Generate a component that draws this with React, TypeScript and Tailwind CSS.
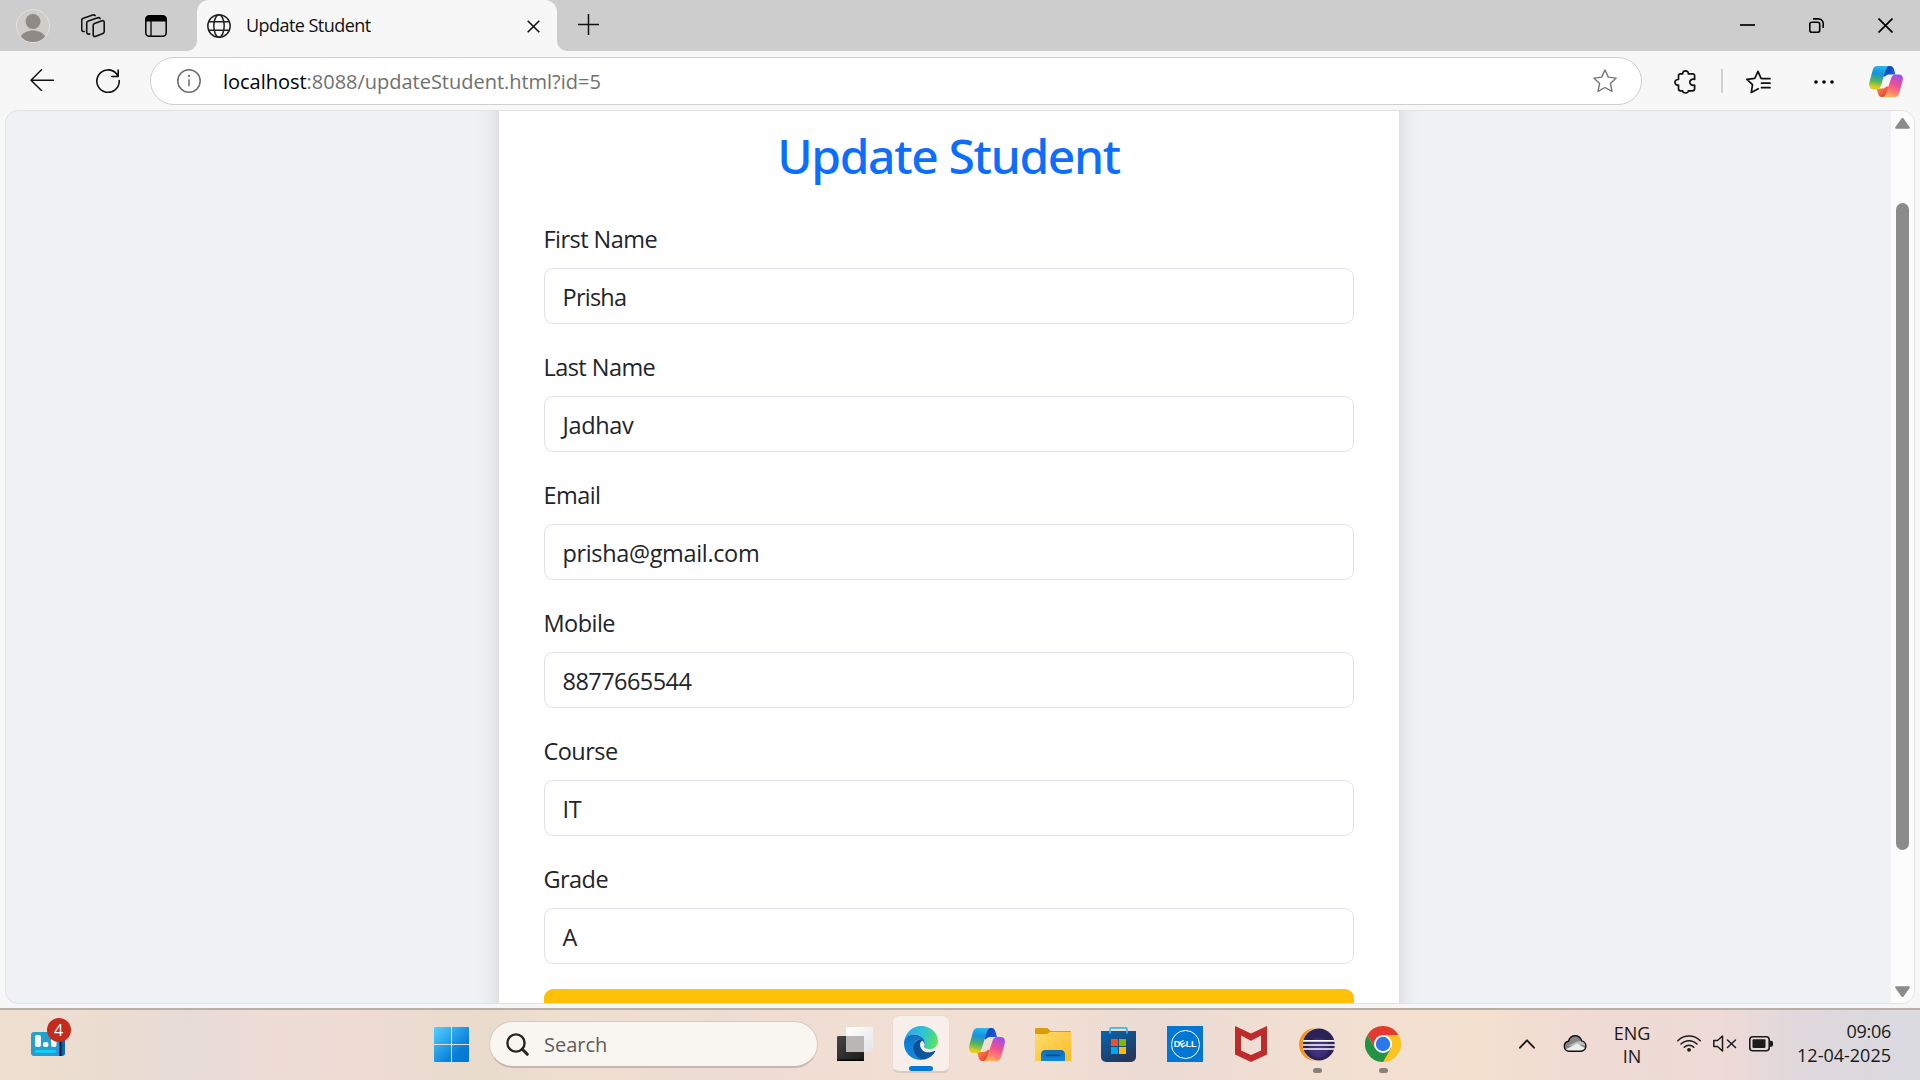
import React from "react";

const BODY_FONT = "font-['Open_Sans','Noto_Sans',sans-serif]";

const fields = [
  { label: "First Name", value: "Prisha", tracking: "tracking-[-0.750px]" },
  { label: "Last Name", value: "Jadhav", tracking: "tracking-[-0.350px]" },
  { label: "Email", value: "prisha@gmail.com", tracking: "tracking-[-0.350px]" },
  { label: "Mobile", value: "8877665544", tracking: "tracking-[-0.550px]" },
  { label: "Course", value: "IT", tracking: "tracking-[-0.350px]" },
  { label: "Grade", value: "A", tracking: "tracking-[-0.350px]" },
];

function CopilotIcon({ id, className }: { id: string; className?: string }) {
  return (
    <svg viewBox="0 0 36 33" className={className} fill="none">
      <defs>
        <linearGradient id={id + "a"} x1="12" y1="0" x2="7" y2="27" gradientUnits="userSpaceOnUse">
          <stop offset="0" stopColor="#27b8f0" />
          <stop offset="0.3" stopColor="#1591dd" />
          <stop offset="0.6" stopColor="#52b45c" />
          <stop offset="0.85" stopColor="#d9cf20" />
          <stop offset="1" stopColor="#ffc800" />
        </linearGradient>
        <linearGradient id={id + "b"} x1="30" y1="9" x2="22" y2="33" gradientUnits="userSpaceOnUse">
          <stop offset="0" stopColor="#a04cf0" />
          <stop offset="0.45" stopColor="#ee5090" />
          <stop offset="0.75" stopColor="#ff7a70" />
          <stop offset="1" stopColor="#ffb657" />
        </linearGradient>
        <linearGradient id={id + "c"} x1="17" y1="1" x2="27" y2="9" gradientUnits="userSpaceOnUse">
          <stop offset="0" stopColor="#0a3bb5" />
          <stop offset="1" stopColor="#1f60e0" />
        </linearGradient>
        <linearGradient id={id + "d"} x1="9" y1="24" x2="17" y2="33" gradientUnits="userSpaceOnUse">
          <stop offset="0" stopColor="#ff8a48" />
          <stop offset="1" stopColor="#e23b2e" />
        </linearGradient>
      </defs>
      <path d="M16 0h6.500c2.300 0 3.300 1.500 4 3.700L28 9h-6c-2.300 0-4 .6-5.300 2.500L14 10z" fill={`url(#${id}c)`} />
      <path d="M20 33h-6.500c-2.300 0-3.300-1.500-4-3.700L8 24h5.500c2.300 0 4-.6 5.300-2.500L22 23z" fill={`url(#${id}d)`} />
      <path d="M8.500 0H22c-2 0-3.200 1.400-4 4l-5.500 17c-.8 2.600-2.200 4-4.600 4H4.500C.8 25-.7 21.500.4 17L3.800 4.500C4.700 1.500 6 0 8.500 0z" fill={`url(#${id}a)`} />
      <path d="M27.500 33H14c2 0 3.200-1.400 4-4l5.500-16c.8-2.600 2.200-4 4.600-4h3.400c3.700 0 5.200 2.500 4.100 7l-3.400 12.500c-.9 3-2.200 4.500-4.700 4.500z" fill={`url(#${id}b)`} />
    </svg>
  );
}

function TitleBar() {
  return (
    <header className="flex h-[51px] shrink-0 items-start bg-[#cdcdcd] text-black">
      <div className="flex w-[197px] shrink-0">
        <svg viewBox="0 0 34 34" className="mt-[9px] ml-4 size-[34px]">
          <circle cx="17" cy="17" r="16.500" fill="#cfcdc9" stroke="#e2e1de" />
          <circle cx="17" cy="12.500" r="7.500" fill="#8f8a86" />
          <path d="M4.800 27.500C6.800 23.700 11.500 21.500 17 21.500s10.200 2.200 12.200 6A16 16 0 0 1 17 33 16 16 0 0 1 4.800 27.500z" fill="#8f8a86" />
        </svg>
        <svg viewBox="0 0 24 24" className="mt-[14px] ml-[31px] size-6" fill="none" stroke="#111" strokeWidth="1.600" strokeLinejoin="round" strokeLinecap="round">
          <path d="M12.200 11.300c0-.9.500-1.600 1.300-1.900l7.600-2.600c1.100-.4 2.100.3 2.100 1.400v9.400c0 .9-.5 1.600-1.300 1.900l-7.600 2.900c-1.100.4-2.100-.3-2.100-1.400z" />
          <path d="M8.700 19.900c-1.900.6-3-.3-3-1.800V9.200c0-1 .6-1.900 1.600-2.200l9.500-3.200c1-.3 1.900 0 2.300.8" />
          <path d="M3.200 17.500c-1.500.2-2.500-.7-2.500-2V6.500c0-1 .6-1.900 1.600-2.200L11.800 1c1-.3 1.900 0 2.300.6" />
        </svg>
        <svg viewBox="0 0 22 22" className="mt-[15px] ml-10 size-[22px]">
          <rect x="0.800" y="0.800" width="20.400" height="20.400" rx="3.500" fill="none" stroke="#000" strokeWidth="1.500" />
          <path d="M.8 6.500V4A3.200 3.200 0 0 1 4 .8h14A3.200 3.200 0 0 1 21.200 4v2.500z" fill="#000" />
          <path d="M6 6v15" stroke="#000" strokeWidth="1.300" />
        </svg>
      </div>
      <div className="relative flex h-[51px] w-[360px] rounded-t-[12px] bg-[#f7f7f7]">
        <svg viewBox="0 0 10 10" className="absolute bottom-0 -left-[10px] size-[10px]"><path d="M10 0v10H0A10 10 0 0 0 10 0z" fill="#f7f7f7" /></svg>
        <svg viewBox="0 0 10 10" className="absolute -right-[10px] bottom-0 size-[10px]"><path d="M0 0v10h10A10 10 0 0 1 0 0z" fill="#f7f7f7" /></svg>
        <svg viewBox="0 0 24 24" className="mt-[14px] ml-[10px] size-6" fill="none" stroke="#222" strokeWidth="1.500">
          <circle cx="12" cy="12" r="11.200" />
          <ellipse cx="12" cy="12" rx="5.200" ry="11.200" />
          <path d="M1.700 7.800h20.600M1.700 16.200h20.600" />
        </svg>
        <span className="mt-[10px] ml-[15px] w-[240px] text-[18px] leading-[30px] tracking-[-0.550px] text-[#111]">Update Student</span>
        <svg viewBox="0 0 13 13" className="mt-[20px] ml-[41px] size-[13px]" stroke="#111" strokeWidth="1.600"><path d="M.7.700l11.600 11.600M12.300.700L.7 12.300" /></svg>
      </div>
      <svg viewBox="0 0 21 21" className="mt-[14px] ml-[21px] size-[21px]" stroke="#111" strokeWidth="1.500"><path d="M10.500 0v21M0 10.500h21" /></svg>
      <div className="ml-auto flex">
        <svg viewBox="0 0 15 15" className="mt-[18px] mr-[54px] size-[15px]" stroke="#000" strokeWidth="1.700"><path d="M0 7h15" /></svg>
        <svg viewBox="0 0 15 15" className="mt-[18px] mr-[54px] size-[15px]" fill="none" stroke="#000" strokeWidth="1.600">
          <rect x="0.800" y="4.300" width="9.900" height="9.900" rx="2" />
          <path d="M4 .9h5.500a4.700 4.700 0 0 1 4.700 4.700V10" />
        </svg>
        <svg viewBox="0 0 15 15" className="mt-[18px] mr-[27px] size-[15px]" stroke="#000" strokeWidth="1.700"><path d="M.5.500l14 14M14.500.500l-14 14" /></svg>
      </div>
    </header>
  );
}

function Toolbar() {
  return (
    <div className="flex h-[59px] shrink-0 bg-[#f7f7f7]">
      <svg viewBox="0 0 24 22" className="mt-[18px] ml-[30px] h-[22px] w-6" fill="none" stroke="#111" strokeWidth="1.500" strokeLinecap="round" strokeLinejoin="round"><path d="M23.500 11.300H1M11.500.800L1 11.300l10.500 10.200" /></svg>
      <svg viewBox="0 0 24 24" className="mt-[18px] ml-[42px] size-6" fill="none" stroke="#111" strokeWidth="1.600" strokeLinecap="round" strokeLinejoin="round"><path d="M23.200 11.500A11.200 11.200 0 1 1 20.500 4.800L22 7M22.200 1v6.500h-6.500" /></svg>
      <div className="mt-[6px] ml-[30px] flex h-12 w-[1492px] items-center rounded-full border-[1.500px] border-[#cfcfcf] bg-white">
        <svg viewBox="0 0 24 24" className="ml-[26px] size-6" fill="none" stroke="#6b6b6b" strokeWidth="1.500">
          <circle cx="12" cy="12" r="11.200" /><path d="M12 10.300v7" /><circle cx="12" cy="6.900" r="1.100" fill="#6b6b6b" stroke="none" />
        </svg>
        <p className="mt-[2px] ml-[22px] text-[20px] leading-7 tracking-[-0.020px] text-[#707070]"><span className="text-black">localhost</span>:8088/updateStudent.html?id=5</p>
        <svg viewBox="0 0 24 24" className="mr-[24px] ml-auto size-6" fill="none" stroke="#767676" strokeWidth="1.400" strokeLinejoin="round"><path d="M12 1l3.300 7.100 7.900 1-5.800 5.300 1.600 7.900L12 18.500l-7 3.800 1.600-7.900L.8 9.100l7.900-1z" /></svg>
      </div>
      <svg viewBox="0 0 22 24" className="mt-[19px] ml-[32px] h-6 w-[22px]" fill="none" stroke="#111" strokeWidth="1.700" strokeLinejoin="round">
        <path d="M8.700 3.800C8.500 2 9.800.9 11.500.9S14.500 2 14.300 3.800h4.200c1.200 0 2.100.8 2.100 2v3.600c-1.200-.3-2.700-.2-3.700.6-1.500 1.200-1.500 3.300 0 4.500 1 .8 2.500.9 3.700.6v3.700c0 1.200-.9 2-2.100 2h-4.200c.2 1.300-1.100 2.200-2.800 2.200s-3-.9-2.800-2.200H6.600c-1.200 0-2.100-.8-2.100-2v-3.700C2.600 15.300.9 14.100.9 12.300s1.700-3 3.600-2.800V5.800c0-1.200.9-2 2.100-2z" />
      </svg>
      <span className="mt-[18px] ml-[25px] h-6 w-[2px] bg-[#d1d1d1]" />
      <svg viewBox="0 0 25 24" className="mt-[19px] ml-[23px] h-6 w-[25px]" fill="none" stroke="#111" strokeWidth="1.700" strokeLinejoin="round" strokeLinecap="round">
        <path d="M17 8.700l-2-.3L12 1.300 8.800 8.300.9 9.300l5.600 5.400L5.300 22.500l7-3.700M17 8.700h7M15.500 13.200H24M15.500 17.700H24" />
      </svg>
      <svg viewBox="0 0 20 4" className="mt-[29px] ml-[43px] h-1 w-5"><circle cx="2" cy="2" r="1.800" /><circle cx="10" cy="2" r="1.800" /><circle cx="18" cy="2" r="1.800" /></svg>
      <CopilotIcon id="top" className="mt-[15px] ml-[35px] h-[31px] w-[34px]" />
    </div>
  );
}

function Page() {
  return (
    <div className="mr-[5px] ml-[5px] flex h-[894px] shrink-0 overflow-hidden rounded-[13px] border border-[#e2e2e4] bg-[#f0f1f5]">
      <main className="flex flex-1 justify-center overflow-hidden">
        <section className="-mt-9 h-[980px] w-[900px] shrink-0 bg-white px-[45px] pt-[52px] text-[#212529] shadow-[0_0_22px_rgba(0,0,0,0.13)]">
          <h1 className="mb-9 text-center font-['Noto_Sans','Open_Sans',sans-serif] text-[48px] leading-[58px] font-medium tracking-[-1.350px] text-[#0d6efd]">Update Student</h1>
          {fields.map((f) => (
            <div key={f.label} className="mb-6 text-[23.500px]">
              <div className="mb-[11px] leading-9 tracking-[-0.550px] pt-px -mt-px mb-[11px]">{f.label}</div>
              <div className="flex h-14 items-center rounded-[9px] border-[1.500px] border-[#dee2e6] bg-white px-[18px] pt-[2px] mb-[25px]">
                <span className={`leading-9 ${f.tracking}`}>{f.value}</span>
              </div>
            </div>
          ))}
          <div className="h-14 rounded-[9px] bg-[#ffc107]" />
        </section>
      </main>
      <aside className="flex w-[23px] shrink-0 flex-col items-center bg-[#fcfcfc]">
        <svg viewBox="0 0 15 11" className="mt-[7px] h-[11px] w-[15px]"><path d="M6.300.700a1.500 1.500 0 0 1 2.400 0l5.900 8.300c.5.900 0 1.800-1 1.800H1.400c-1 0-1.500-.9-1-1.800z" fill="#8b8b8b" /></svg>
        <div className="mt-[74px] h-[647px] w-[13px] rounded-full bg-[#8b8b8b]" />
        <svg viewBox="0 0 15 11" className="mt-auto mb-[6px] h-[11px] w-[15px] rotate-180"><path d="M6.300.700a1.500 1.500 0 0 1 2.400 0l5.900 8.300c.5.900 0 1.800-1 1.800H1.400c-1 0-1.500-.9-1-1.800z" fill="#8b8b8b" /></svg>
      </aside>
    </div>
  );
}

function WidgetIcon() {
  return (
    <div className="relative mt-[22px] ml-[31px] h-6 w-[34px]">
      <svg viewBox="0 0 34 24" className="h-6 w-[34px]">
        <defs><linearGradient id="wg" x1="0" y1="0" x2="1" y2="1"><stop stopColor="#20a8c0" /><stop offset="1" stopColor="#2f93dc" /></linearGradient></defs>
        <rect x="20" width="14" height="24" rx="3" fill="#1264b0" />
        <rect x="28" y="8" width="2.500" height="16" fill="#03182e" />
        <path d="M3 0h25.500v24H3a3 3 0 0 1-3-3V3a3 3 0 0 1 3-3z" fill="url(#wg)" />
        <rect x="4" y="3" width="6" height="12" rx="2" fill="#f3fdff" />
        <rect x="12" y="10" width="5.500" height="5" rx="2" fill="#f3fdff" />
        <rect x="20" y="6" width="5.500" height="9" rx="2" fill="#f3fdff" />
        <rect x="4" y="18" width="21" height="2.700" rx="1" fill="#0cd2f5" />
      </svg>
      <span className="absolute -top-[14px] left-[15.500px] flex size-6 items-center justify-center rounded-full bg-[#c42b1c] text-[16px] leading-none text-white">4</span>
    </div>
  );
}

function StartIcon() {
  return (
    <svg viewBox="0 0 35 35" className="size-[35px]">
      <defs><linearGradient id="win" x1="0" y1="0" x2="35" y2="35" gradientUnits="userSpaceOnUse"><stop stopColor="#54d2ff" /><stop offset="0.500" stopColor="#1d94e4" /><stop offset="0.700" stopColor="#0a7ed8" /><stop offset="1" stopColor="#0074d0" /></linearGradient></defs>
      <path d="M1 0h16v17H0V1a1 1 0 0 1 1-1zM18 0h16a1 1 0 0 1 1 1v16H18zM0 18h17v17H1a1 1 0 0 1-1-1zM18 18h17v16a1 1 0 0 1-1 1H18z" fill="url(#win)" />
    </svg>
  );
}

function TaskViewIcon() {
  return (
    <svg viewBox="0 0 36 34" className="h-[34px] w-9">
      <defs>
        <linearGradient id="tv1" x1="0" y1="0" x2="1" y2="1"><stop stopColor="#474543" /><stop offset="1" stopColor="#1a1a1a" /></linearGradient>
        <linearGradient id="tv2" x1="0" y1="0" x2="1" y2="1"><stop stopColor="#ffffff" /><stop offset="1" stopColor="#e3e4e6" /></linearGradient>
      </defs>
      <rect x="0" y="9" width="27" height="25" rx="1.300" fill="url(#tv1)" />
      <rect x="9" y="0" width="27" height="25" rx="1" fill="url(#tv2)" />
      <rect x="9" y="9" width="18" height="16" fill="#b9b7b5" />
      <rect y="32.500" width="27" height="1.500" rx=".7" fill="#050505" />
    </svg>
  );
}

function EdgeIcon() {
  return (
    <svg viewBox="0 0 36 36" className="size-9">
      <defs>
        <linearGradient id="e1" x1="3" y1="8" x2="36" y2="20" gradientUnits="userSpaceOnUse"><stop stopColor="#2ea5ee" /><stop offset="0.450" stopColor="#2fc2d6" /><stop offset="0.750" stopColor="#45d590" /><stop offset="1" stopColor="#6ce848" /></linearGradient>
        <linearGradient id="e2" x1="10" y1="8" x2="12" y2="36" gradientUnits="userSpaceOnUse"><stop stopColor="#116fb9" /><stop offset="0.400" stopColor="#0b7fd8" /><stop offset="1" stopColor="#1388df" /></linearGradient>
        <linearGradient id="e3" x1="10" y1="20" x2="33" y2="30" gradientUnits="userSpaceOnUse"><stop stopColor="#0d4f96" /><stop offset="1" stopColor="#1159a8" /></linearGradient>
      </defs>
      <path d="M.3 16.500C1.500 7 8.800 0 18 0c10.500 0 18 7.500 18 15.500 0 5.500-4 9-9.200 9-3.800 0-6-1.300-6-2.700 0-1 1.300-1.600 1.300-4.300 0-4.700-5-8.500-11-8.500C6 9 2 12 .3 16.500z" fill="url(#e1)" />
      <path d="M0 18.500C0 12.500 5 9 11 9c6.200 0 11.100 3.900 11.100 8.500 0 1-.2 1.700-.4 2.300-.8-3.200-2.200-5.600-5.200-5.600-3.500 0-6 3.800-6 8.300 0 7 4.800 12.500 11 13-1.100.3-2.300.4-3.500.4C8 36 0 28.500 0 18.500z" fill="url(#e2)" />
      <path d="M16 14.300c-3.400 1-6 4.400-6 8.700C10 30.500 16 36 22 35.500c5-1.200 8.800-4.500 11-8.200.4-.8-.2-1.300-1-.9-2 1-4.300 1.400-6.500 1.400-5 0-8.500-4-8.500-8.300 0-2.300 1.700-4.500 3.700-3.800-1.200-1.200-3-1.900-4.700-1.400z" fill="url(#e3)" />
    </svg>
  );
}

function FolderIcon() {
  return (
    <svg viewBox="0 0 36 33" className="h-[33px] w-9">
      <defs>
        <linearGradient id="f1" x1="0" y1="0" x2="1" y2="1"><stop stopColor="#ffdb6b" /><stop offset="1" stopColor="#fdbc28" /></linearGradient>
        <linearGradient id="f2" x1="0" y1="0" x2="0" y2="1"><stop stopColor="#0c6cb6" /><stop offset="1" stopColor="#1088dc" /></linearGradient>
      </defs>
      <path d="M1.300 0h10c1 0 1.800.5 2.500 1.200L15.500 3H35c.6 0 1 .4 1 1v6H0V1.300C0 .6.600 0 1.300 0z" fill="#dc9c08" />
      <path d="M0 6h11c1 0 1.700-.3 2.500-1l1.300-1H36v28c0 .6-.4 1-1 1H1c-.6 0-1-.4-1-1z" fill="url(#f1)" />
      <path d="M6 33v-7c0-2.200 1.600-4 4-4h16c2.400 0 4 1.800 4 4v7z" fill="url(#f2)" />
      <rect x="10.500" y="26.400" width="15" height="1.800" rx=".9" fill="#0a4a84" />
    </svg>
  );
}

function StoreIcon() {
  return (
    <svg viewBox="0 0 35 35" className="mr-px size-[35px]">
      <defs><linearGradient id="st" x1="0" y1="0" x2="0.600" y2="1"><stop stopColor="#0865b0" /><stop offset="1" stopColor="#24375c" /></linearGradient></defs>
      <path d="M0 4h35v26a5 5 0 0 1-5 5H5a5 5 0 0 1-5-5z" fill="url(#st)" />
      <path d="M9 6.500V2.200C9 1.400 9.500.9 10.300.900h14.400c.8 0 1.300.5 1.300 1.300v4.300" fill="none" stroke="#30bdf0" strokeWidth="1.700" />
      <rect x="10" y="12" width="7" height="7" fill="#f25022" /><rect x="18" y="12" width="7" height="7" fill="#7fba00" />
      <rect x="10" y="20" width="7" height="7" fill="#00a4ef" /><rect x="18" y="20" width="7" height="7" fill="#ffb900" />
    </svg>
  );
}

function DellIcon() {
  return (
    <div className="flex size-9 items-center justify-center bg-[#0176d3]">
      <div className="flex size-[29px] items-center justify-center rounded-full border-[1.500px] border-white font-['Liberation_Sans',sans-serif] text-[9px] leading-none font-bold tracking-[-0.300px] text-white">
        <span>D</span><span className="-rotate-[28deg]">E</span><span>LL</span>
      </div>
    </div>
  );
}

function McAfeeIcon() {
  return (
    <svg viewBox="0 0 32 36" className="h-9 w-8">
      <path fillRule="evenodd" d="M0 0l16 7.500L32 0v28.500L16 36 0 28.500zM6 9.500v15L16 29l10-4.500v-15L16 14.800z" fill="#be2b2b" />
    </svg>
  );
}

function EclipseIcon() {
  return (
    <svg viewBox="0 0 36 33" className="h-[33px] w-9">
      <defs><radialGradient id="ec" cx="0.500" cy="0.600" r="0.500"><stop stopColor="#473788" /><stop offset="0.600" stopColor="#3a2c72" /><stop offset="0.650" stopColor="#2c2255" /><stop offset="1" stopColor="#2c2255" /></radialGradient></defs>
      <path d="M16 0C7 .5 0 7.500 0 16.500S7 32.500 16 33C8.500 30.500 4 24 4 16.500S8.500 2.500 16 0z" fill="#f7941e" />
      <circle cx="19.800" cy="16.500" r="16" fill="url(#ec)" />
      <path d="M4 12.800h31.600M3.600 17h32.400M4 21h31.600" stroke="#fff" strokeWidth="1.700" />
    </svg>
  );
}

function ChromeIcon() {
  return (
    <svg viewBox="0 0 36 36" className="size-9">
      <path d="M18 9h15.600A18 18 0 0 1 18 36z" fill="#fcc31e" />
      <path d="M18 9h15.600A18 18 0 0 0 2.400 9l7.800 13.500z" fill="#e33b2e" />
      <path d="M2.400 9A18 18 0 0 0 18 36l7.800-13.500H10.200z" fill="#229342" />
      <circle cx="18" cy="18" r="9" fill="#fff" />
      <circle cx="18" cy="18" r="7.200" fill="#2b78ee" />
    </svg>
  );
}

const apps = [
  { name: "taskview", icon: <TaskViewIcon />, running: false },
  { name: "edge", icon: <EdgeIcon />, running: false },
  { name: "copilot", icon: <CopilotIcon id="bar" className="h-[33px] w-9" />, running: false },
  { name: "files", icon: <FolderIcon />, running: false },
  { name: "store", icon: <StoreIcon />, running: false },
  { name: "dell", icon: <DellIcon />, running: false },
  { name: "mcafee", icon: <McAfeeIcon />, running: false },
  { name: "eclipse", icon: <EclipseIcon />, running: true },
  { name: "chrome", icon: <ChromeIcon />, running: true },
];

function Taskbar() {
  return (
    <footer className="flex h-[72px] shrink-0 items-start border-t-2 border-[#b9afa9] bg-[linear-gradient(90deg,#efdfd0_0px,#eaddd0_110px,#e7dbd8_190px,#eedcd6_270px,#eddbd4_380px,#e8dbcb_480px,#efdfcf_570px,#eddcd3_720px,#f2dfd3_900px,#f2dfd3_1050px,#ebdad4_1150px,#f1dfd3_1290px,#f3e0ce_1480px,#efdad5_1600px,#eedad6_1720px,#dfd8dc_1800px,#dadae0_1920px)] text-[#191919]">
      <WidgetIcon />
      <div className="mt-[17px] ml-[369px]"><StartIcon /></div>
      <div className="mt-[11px] ml-[20px] flex h-[47px] w-[329px] items-center rounded-full border border-b-2 border-[#d8cac2] border-b-[#c3b7ae] bg-[#f9f5f1]">
        <svg viewBox="0 0 23 23" className="ml-[16px] size-[23px]" fill="none" stroke="#262626" strokeWidth="2.400" strokeLinecap="round"><circle cx="10" cy="10" r="8.600" /><path d="M16.300 16.300l5 5" strokeWidth="3" /></svg>
        <span className="mt-px ml-[15px] text-[20px] leading-7 text-[#5f5c5a]">Search</span>
      </div>
      <div className="ml-1 flex">
        {apps.map((a) => (
          <div key={a.name} className="flex h-[70px] w-[66px] flex-col items-center">
            {a.name === "edge" ? (
              <div className="mt-[5px] flex h-[58px] w-[58px] flex-col items-center rounded-[7px] border border-b-2 border-[#e9dbd2] border-b-[#dacac1] bg-[#f8efea] pt-[10px]">
                {a.icon}
                <span className="mt-[6px] h-[5px] w-6 shrink-0 rounded-full bg-[#0078d4]" />
              </div>
            ) : (
              <>
                <div className="mt-4 flex h-9 items-center">{a.icon}</div>
                {a.running && <span className="mt-[6px] h-[5px] w-[9px] rounded-full bg-[#8b8079]" />}
              </>
            )}
          </div>
        ))}
      </div>
      <svg viewBox="0 0 16 10" className="mt-[29px] ml-[103px] h-[10px] w-4" fill="none" stroke="#1b1b1b" strokeWidth="1.900" strokeLinecap="round" strokeLinejoin="round"><path d="M1 8.700l7-7.400 7 7.400" /></svg>
      <svg viewBox="0 0 24 17" className="mt-[25px] ml-7 h-[17px] w-6">
        <path d="M6 16.200a5 5 0 0 1-.6-9.900C6.500 3 9 .800 12 .800c3.300 0 5.800 2 6.700 5.100a5.200 5.200 0 0 1-.8 10.300z" fill="#858585" />
        <path d="M5 11l8-4 5-1.300a5.200 5.200 0 0 1 4.700 5L18 10z" fill="#bcbcbc" />
        <path d="M2.500 14.500L14 8.500l8.300 4.700c-.8 1.800-2.400 3-4.400 3H6c-1.400 0-2.600-.6-3.500-1.700z" fill="#ededed" />
        <path d="M6 16.200a5 5 0 0 1-.6-9.900C6.500 3 9 .800 12 .800c3.300 0 5.800 2 6.700 5.100a5.200 5.200 0 0 1-.8 10.300z" fill="none" stroke="#111" strokeWidth="1.400" />
      </svg>
      <div className="mt-[12px] ml-[25px] flex w-10 flex-col items-center text-[18px] leading-[23px]"><span>ENG</span><span>IN</span></div>
      <svg viewBox="0 0 24 17" className="mt-[25px] ml-[25px] h-[17px] w-6" fill="none" stroke="#1b1b1b" strokeWidth="1.500" strokeLinecap="round">
        <path d="M.8 5.700a15.800 15.800 0 0 1 22.400 0M4 9a11.300 11.300 0 0 1 16 0M7.200 12.300a6.800 6.800 0 0 1 9.600 0" /><circle cx="12" cy="14.800" r="1.900" fill="#1b1b1b" stroke="none" />
      </svg>
      <svg viewBox="0 0 24 17" className="mt-[25px] ml-3 h-[17px] w-6" fill="none" stroke="#1b1b1b" strokeWidth="1.500" strokeLinejoin="round" strokeLinecap="round">
        <path d="M.8 5.500h3.700L9.500 1v15l-5-4.500H.8z" /><path d="M14.500 5l8 7.500M22.500 5l-8 7.500" />
      </svg>
      <svg viewBox="0 0 24 16" className="mt-[26px] ml-3 h-4 w-6"><rect x="0.800" y="0.800" width="19.400" height="13.900" rx="3" fill="none" stroke="#1b1b1b" strokeWidth="1.600" /><rect x="3.500" y="3.300" width="13" height="8.800" rx="1" fill="#1b1b1b" /><path d="M21 4.800h1.200a1.800 1.800 0 0 1 1.800 1.800V9a1.800 1.800 0 0 1-1.800 1.800H21z" fill="#1b1b1b" /></svg>
      <div className="mt-[9px] mr-[29px] ml-auto flex flex-col items-end text-[18px] leading-6"><span className="tracking-[-0.300px]">09:06</span><span>12-04-2025</span></div>
    </footer>
  );
}

export default function App() {
  return (
    <div className={`flex h-[1080px] w-[1920px] flex-col overflow-hidden bg-[#f7f7f7] ${BODY_FONT}`}>
      <TitleBar />
      <Toolbar />
      <Page />
      <div className="h-1 shrink-0 bg-[#f6f6f6]" />
      <Taskbar />
    </div>
  );
}
